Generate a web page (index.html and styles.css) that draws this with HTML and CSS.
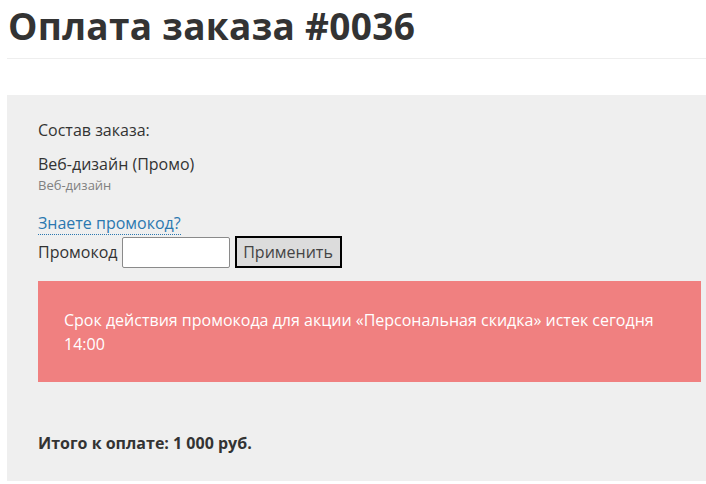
FILE: index.html
```html
<!DOCTYPE html>
<html lang="ru">
<head>
    <meta charset="UTF-8">
    <meta name="viewport" content="width=device-width, initial-scale=1.0">
    <title>Оплата заказа #0036</title>
    <link rel="stylesheet" href="styles.css">
</head>
<body>
    <div class="page">
        <h1 class="page-title">Оплата заказа #0036</h1>
        <hr class="divider">

        <div class="order-box">
            <p class="order-label">Состав заказа:</p>

            <div class="order-item">
                <div class="item-name">Веб-дизайн (Промо)</div>
                <div class="item-category">Веб-дизайн</div>
            </div>

            <a href="#" class="promo-toggle">Знаете промокод?</a>
            <form class="promo-form">
                <label for="promo">Промокод</label>
                <input type="text" id="promo" class="promo-input">
                <button type="submit" class="promo-apply">Применить</button>
            </form>

            <div class="alert">
                Срок действия промокода для акции «Персональная скидка» истек сегодня 14:00
            </div>

            <p class="total">Итого к оплате: 1 000 руб.</p>
        </div>
    </div>
</body>
</html>
```

FILE: styles.css
```css
:root {
    --text-dark: #333333;
    --text-muted: #808080;
    --link-color: #2b78b0;
    --panel-bg: #efefef;
    --alert-bg: #f08080;
}

html, body {
    overflow-x: hidden;
}

body {
    margin: 0;
    padding: 0 0 0 7px;
    font-family: 'Open Sans', sans-serif;
    font-size: 16px;
    color: var(--text-dark);
    background: #ffffff;
}

.page {
    width: 725px;
}

.page-title {
    max-width: 690px;
    margin: 0;
    padding: 1px 0 0 1px;
    font-size: 37px;
    font-weight: 700;
    line-height: 50px;
    letter-spacing: 0.3px;
    color: #333333;
}

.divider {
    margin: 7px 0 36px;
    border: none;
    border-top: 1px solid #eeeeee;
}

.order-box {
    background: var(--panel-bg);
    padding: 24px 31px 27px 31px;
}

.order-label {
    margin: 0 0 12px;
    line-height: 22px;
}

.order-item {
    margin-bottom: 17px;
}

.item-name {
    line-height: 22px;
}

.item-category {
    font-size: 13px;
    color: var(--text-muted);
    line-height: 20px;
}

.promo-toggle {
    display: inline-block;
    color: var(--link-color);
    text-decoration: none;
    border-bottom: 1px dotted var(--link-color);
    line-height: 21px;
}

.promo-form {
    display: flex;
    align-items: center;
    gap: 4px;
    margin: 1px 0 13px;
}

.promo-input {
    width: 108px;
    height: 31px;
    box-sizing: border-box;
    border: 1px solid #8a8a8a;
    border-radius: 2px;
    background: #ffffff;
    margin-right: 1px;
}

.promo-apply {
    width: 107px;
    height: 32px;
    padding: 0;
    border: 2px solid #000000;
    background: #dcdcdc;
    color: #444444;
    font-family: inherit;
    font-size: 16px;
}

.alert {
    background: var(--alert-bg);
    color: #ffffff;
    padding: 27px 26px 26px;
    line-height: 24px;
}

.total {
    margin: 50px 0 0;
    font-weight: 700;
    font-size: 16px;
    line-height: 22px;
}
```
